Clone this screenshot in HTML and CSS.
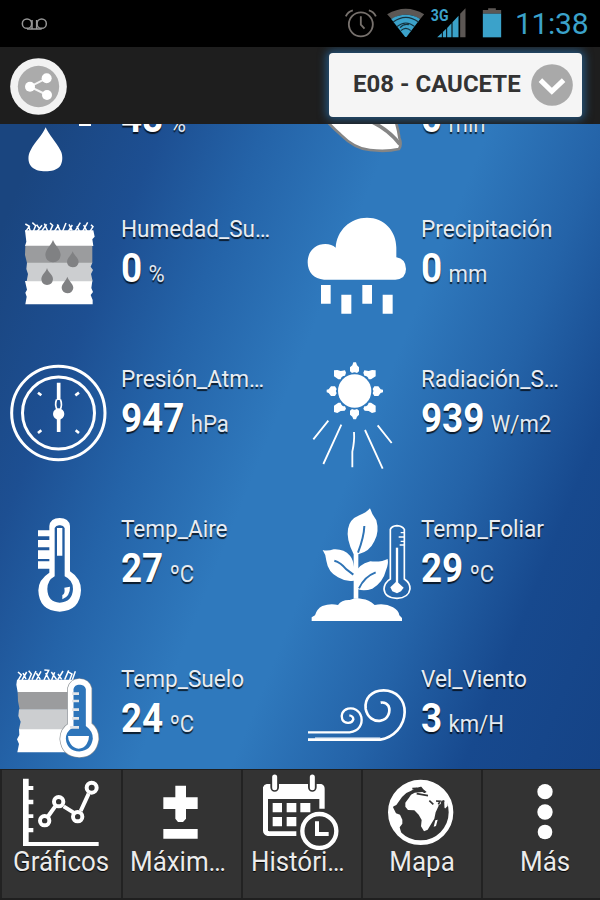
FILE: index.html
```html
<!DOCTYPE html>
<html lang="es">
  <head>
    <meta charset="utf-8" />
    <title>Estación E08 - Caucete</title>
    <meta name="viewport" content="width=device-width,initial-scale=1" />
    <link rel="stylesheet" href="styles.css">
  </head>

  <body>
    <div class="app">
      <div class="status-bar">
        <svg class="voicemail" viewBox="60 45 90 54">
          <g fill="none" stroke="#969696" stroke-width="4.5">
            <circle cx="81" cy="71" r="14" />
            <circle cx="125" cy="71" r="14" />
            <path d="M81 87H125M96 60V86M110 60V86" />
          </g>
        </svg>
        <svg class="status-icons" viewBox="120 0 500 141">
          <!-- alarm -->
          <g fill="none" stroke="#77716d" stroke-width="5.5">
            <circle cx="182" cy="73" r="36" />
            <path d="M182 49V74L193 86" />
            <path d="M137 49Q143 35 158 31M206 31Q221 35 227 49" />
          </g>
          <!-- wifi -->
          <path fill="#5c5754" d="M261 43Q317 10 372 43L360 57Q317 31 274 57Z" />
          <path fill="#3ba2ca" d="M273 57Q317 32 360 57L319 111H315Z" />
          <g fill="none" stroke="#16313c" stroke-width="3.5">
            <path d="M279 66Q317 38 355 66M290 80Q317 58 344 80M302 92Q317 78 332 92" />
            <path d="M300 83Q310 70 326 74" />
          </g>
          <!-- signal -->
          <path fill="#3ba2ca" d="M411 112L425 99V112ZM428 96L438 86V112H428ZM441 84L454 70V112H441ZM457 67L475 47V112H457Z" />
          <path fill="#5c5754" d="M480 41L496 25V112H480Z" />
          <!-- battery -->
          <path fill="#5c5754" d="M564 25H587V30H603V41H548V30H564Z" />
          <path fill="#3ba2ca" d="M548 41H603V112H548Z" />
          <text class="network" x="392" y="63" textLength="53" lengthAdjust="spacingAndGlyphs">3G</text>
        </svg>
        <span class="clock">11:38</span>
      </div>

      <div class="header">
        <svg class="share" viewBox="29 174 171 171">
          <circle cx="114.500" cy="259.500" r="85" fill="#f2f2f2" />
          <circle cx="114.500" cy="259.500" r="62" fill="#ababab" />
          <path d="M138 235L89 260L140 285" fill="none" stroke="#f5f5f5" stroke-width="6" />
          <g fill="#fff">
            <circle cx="139" cy="235" r="15" />
            <circle cx="89" cy="260" r="15" />
            <circle cx="140" cy="285" r="15" />
          </g>
        </svg>
        <button class="station">
          <span>E08 - CAUCETE</span>
          <svg viewBox="693 192 125 125">
            <circle cx="755.500" cy="254.500" r="62" fill="#a9a9a9" />
            <path d="M721 240L755 273L790 240" fill="none" stroke="#fff" stroke-width="15" />
          </svg>
        </button>
      </div>

      <div class="sensors">
        <div class="sensor-grid">
          <div class="sensor">
            <svg viewBox="0 150 360 450">
              <path fill="#fff" d="M137 382C145 402 166 423 182 452C188 463 189 483 182 496C173 511 152 514 137 514C120 514 101 511 91 496C83 483 84 464 91 452C107 423 129 403 137 382ZM237 360H273V378H237Z" />
            </svg>
            <div class="reading">
              <div class="name">&nbsp;</div>
              <div class="value"><b>48</b> <span>%</span></div>
            </div>
          </div>

          <div class="sensor">
            <svg viewBox="0 150 360 450">
              <path fill="#fff" stroke="#858585" stroke-width="8" d="M60 340Q91 377 121 403Q165 447 210 450Q258 456 297 447Q306 434 298 413Q294 380 280 345Z" />
              <path fill="none" stroke="#858585" stroke-width="11" d="M190 355Q258 379 300 433" />
            </svg>
            <div class="reading">
              <div class="name">&nbsp;</div>
              <div class="value"><b>0</b> <span>min</span></div>
            </div>
          </div>

          <div class="sensor">
            <svg viewBox="0 0 360 450">
              <path fill="#fff" d="M75 91H280L284 110L277 118L280 138H75L79 125ZM75 243H277L274 264L279 276L272 285L278 300V313H76L80 290L76 278L81 269Z" />
              <path fill="#9b9c9e" d="M76 137H277V189H81L75 165Z" />
              <path fill="#ccced0" d="M81 188H277L272 200L279 210L273 222L278 244H80L84 222L79 207Z" />
              <g fill="none" stroke="#fff" stroke-width="4.5">
                <path d="M77 95L88 79L76 72M91 94L86 78M100 94L107 77L97 68M112 94L126 76M118 86L110 74M125 93L140 73M143 93L133 71M150 94L158 76L150 69M163 94L176 75M181 94L172 73M188 94L198 69M205 94L217 75M216 91L207 73M225 94L241 68M238 94L231 78M248 94L263 67M261 94L251 75M270 94L279 80L273 74" />
              </g>
              <g fill="#808183">
                <path d="M159 120C164 135 182 148 182 165Q180 187 159 187Q138 187 136 165C136 148 154 135 159 120Z" />
                <path d="M218 154C222 166 236 174 236 186Q234 202 218 202Q202 201 201 186C201 174 214 166 218 154Z" />
                <path d="M141 204C144 217 159 223 159 238Q157 255 141 255Q126 255 124 238C124 224 138 217 141 204Z" />
                <path d="M202 230C206 243 220 251 220 264Q217 280 202 280Q187 279 185 264C185 251 198 243 202 230Z" />
              </g>
            </svg>
            <div class="reading">
              <div class="name">Humedad_Su…</div>
              <div class="value"><b>0</b> <span>%</span></div>
            </div>
          </div>

          <div class="sensor">
            <svg viewBox="0 0 360 450">
              <path fill="#fff" d="M72 239C42 237 23 217 23 187C23 153 46 132 76 132Q95 132 107 143C110 91 151 53 201 53C253 53 290 94 289 145V172Q317 176 318 207Q318 237 286 239Z" />
              <path fill="#fff" d="M63 255H92V311H63ZM124 284H154V341H124ZM187 255H216V311H187ZM248 284H278V341H248Z" />
            </svg>
            <div class="reading">
              <div class="name">Precipitación</div>
              <div class="value"><b>0</b> <span>mm</span></div>
            </div>
          </div>

          <div class="sensor">
            <svg viewBox="0 0 360 450">
              <g fill="none" stroke="#fff">
                <circle cx="175" cy="189" r="140" stroke-width="9" />
                <circle cx="175.500" cy="189" r="108" stroke-width="9" />
                <path stroke-width="8" d="M114 128L124 136M237 128L226 136M114 249L124 241M237 249L227 241" />
                <path stroke-width="11" d="M176 98V150M176 203V246" />
                <path stroke-width="5" d="M170 148Q163 164 172 180M181 148Q188 164 180 180" />
              </g>
              <circle cx="176" cy="192" r="17" fill="#fff" />
            </svg>
            <div class="reading">
              <div class="name">Presión_Atm…</div>
              <div class="value"><b>947</b> <span>hPa</span></div>
            </div>
          </div>

          <div class="sensor">
            <svg viewBox="0 0 360 450">
              <circle cx="164" cy="123" r="50" fill="#fff" />
              <g fill="#fff">
                <path d="M150 64V52L157 46L160 37H168L171 46L177 52V64L171 69Q163 65 156 69Z" />
                <path d="M150 182V194L157 200L160 208H168L171 200L177 194V182L171 177Q163 181 156 177Z" />
                <path d="M105 109H93L86 118L80 119V127L86 129L93 138H105L110 130Q105 123 110 117Z" />
                <path d="M223 109H235L242 118L249 119V127L242 129L235 138H223L218 130Q223 123 218 117Z" />
                <path d="M115 88L102 79V61L112 60L122 63L135 61L138 68L135 77Q124 77 122 88Z" />
                <path d="M213 88L227 79V61L216 60L206 63L193 61L190 68L193 77Q204 77 206 88Z" />
                <path d="M115 158L102 167V186L112 189L122 183L134 182L138 176L135 169Q124 169 122 158Z" />
                <path d="M213 158L227 167V186L216 189L206 183L194 182L190 176L193 169Q204 169 206 158Z" />
              </g>
              <path fill="none" stroke="#fff" stroke-width="5.5" d="M85 212L40 268M124 224L70 342M162 246Q164 273 157 305V352M195 240L248 356M233 226L275 279" />
            </svg>
            <div class="reading">
              <div class="name">Radiación_S…</div>
              <div class="value"><b>939</b> <span>W/m2</span></div>
            </div>
          </div>

          <div class="sensor">
            <svg viewBox="0 0 360 450">
              <path fill="#fff" fill-rule="evenodd" d="M148 91V78Q151 54 179 54Q207 54 210 78V214Q243 235 243 271Q240 333 179 335Q117 333 115 271Q115 239 148 218V206H114V184H148V177H114V151H148V142H114V120H148V109H114V91ZM164 84V229Q142 241 142 267Q143 306 179 308Q217 306 219 267Q219 240 194 229V84Q190 75 179 76Q168 75 164 84Z" />
              <path fill="#fff" d="M171 84H187V167H171ZM193 263L210 260Q211 288 187 298V285Q196 282 193 263Z" />
            </svg>
            <div class="reading">
              <div class="name">Temp_Aire</div>
              <div class="value"><b>27</b> <span>ºC</span></div>
            </div>
          </div>

          <div class="sensor">
            <svg viewBox="0 0 360 450">
              <g fill="#fff">
                <path d="M210 25Q215 42 229 61Q239 96 223 124Q209 155 175 163V296H161V242Q137 246 114 232Q84 216 79 182Q78 164 68 150Q83 154 101 148Q131 146 150 167Q160 179 161 200V163Q138 118 144 87Q148 58 178 46Q199 38 210 25Z" />
                <path d="M162 225Q174 193 211 184Q244 187 263 177Q266 192 258 211Q249 248 217 266Q193 275 174 268Z" />
                <path d="M35 363V352L45 346Q51 326 67 318Q91 309 114 315Q125 299 149 300Q168 291 187 297Q206 298 224 315Q256 309 279 322Q296 331 298 346L306 354V363Z" />
              </g>
              <path fill="none" stroke="#2e73b5" stroke-width="6" d="M193 78Q192 110 174 158M103 182Q122 187 139 208L160 224M177 265Q193 230 227 217" />
              <g fill="none" stroke="#fff" stroke-width="5">
                <path d="M271 237V88Q275 78 291 77Q307 78 313 88V237Q331 249 330 267Q326 294 291 295Q254 294 252 267Q253 248 271 237Z" />
                <path d="M302 98H314M296 111H314M302 124H314M299 135H314" stroke-width="4" />
                <path d="M291 143V255" stroke-width="7" />
              </g>
              <path fill="#fff" d="M290 244L311 263L303 274L291 280L277 274L271 262Z" />
            </svg>
            <div class="reading">
              <div class="name">Temp_Foliar</div>
              <div class="value"><b>29</b> <span>ºC</span></div>
            </div>
          </div>

          <div class="sensor">
            <svg viewBox="0 30 360 450">
              <path fill="#fff" d="M51 119H226V157H53L49 134ZM57 267H205V337H52L57 312L51 298L58 285Z" />
              <path fill="#9b9c9e" d="M53 156H208V209H59L54 183Z" />
              <path fill="#ccced0" d="M57 208H208V268H57L62 245L55 228Z" />
              <path fill="none" stroke="#fff" stroke-width="4.5" d="M54 122L64 105L54 96M66 120L80 96M78 117L69 99M86 121L94 102L86 92M96 119L108 93M109 120L123 94M121 119L109 99M132 120L146 91L133 90M148 120L137 99M155 120L164 97M170 119L154 96M173 120L189 93M185 118L174 102M194 119L206 91M209 120L216 102L202 94M217 119L226 94" />
              <path fill="#2d75ba" stroke="#8c9297" stroke-width="21" d="M212 257V146Q217 126 238 125Q261 126 266 146V254Q288 270 287 297Q281 341 238 343Q193 341 189 297Q189 271 212 257Z" />
              <path fill="#2d75ba" stroke="#fff" stroke-width="17" d="M212 257V146Q217 126 238 125Q261 126 266 146V254Q288 270 287 297Q281 341 238 343Q193 341 189 297Q189 271 212 257Z" />
              <path fill="none" stroke="#e2e5e8" stroke-width="8" d="M216 161H237M216 183H237M216 209H237M216 235H237M210 262H237" />
              <path fill="#fff" d="M204 288H267Q267 302 260 312Q251 326 236 326Q221 325 212 312Q204 302 204 288Z" />
            </svg>
            <div class="reading">
              <div class="name">Temp_Suelo</div>
              <div class="value"><b>24</b> <span>ºC</span></div>
            </div>
          </div>

          <div class="sensor">
            <svg viewBox="0 30 360 450">
              <g fill="none" stroke="#fff" stroke-width="8">
                <path d="M24 277H149C178 274 188 252 184 231C178 209 160 203 144 206C126 211 122 227 127 239C135 253 156 251 160 238Q160 228 148 226" stroke-width="7" />
                <path d="M24 299H241C281 292 313 259 314 217C315 179 288 151 251 151C213 151 193 177 197 207C202 232 221 245 242 242C265 238 273 214 265 197Q257 185 242 188" />
                <path d="M45 294H241" stroke-width="3" />
              </g>
            </svg>
            <div class="reading">
              <div class="name">Vel_Viento</div>
              <div class="value"><b>3</b> <span>km/H</span></div>
            </div>
          </div>
        </div>
      </div>

      <div class="nav">
        <div class="nav-item">
          <svg viewBox="4 30 360 240">
            <path fill="#fff" d="M67 56H84V78H98V90H84V119H98V133H84V163H98V174H84V204H98V217H84V246H294V258H67Z" />
            <g fill="none" stroke="#fff" stroke-width="12">
              <path d="M143 168L163 140M189 139L219 158M240 153L264 101" />
              <circle cx="132" cy="182" r="14" />
              <circle cx="174" cy="125" r="14" />
              <circle cx="231" cy="170" r="14" />
              <circle cx="273" cy="83" r="15" />
            </g>
          </svg>
          <span>Gráficos</span>
        </div>
        <div class="nav-item truncated">
          <svg viewBox="366 30 360 240">
            <path fill="#fff" d="M526 77H558V112H593V147H558V176L549 186H534L526 176V147H490V112H526ZM490 207H593V236H490Z" />
          </svg>
          <span>Máxim…</span>
        </div>
        <div class="nav-item truncated">
          <svg viewBox="726 30 360 240">
            <path fill="#fff" fill-rule="evenodd" d="M800 72H964Q974 75 974 86V146H958V117H804V212Q807 214 812 214H889V228H803Q789 224 789 212V82Q792 73 800 72Z" />
            <path fill="#fff" d="M818 129H846V157H818ZM860 129H889V157H860ZM901 129H931V157H901ZM818 171H846V199H818ZM860 171H889V199H860Z" />
            <g fill="none" stroke-linecap="round">
              <path stroke="#333" stroke-width="26" d="M824 53V82M937 53V82" />
              <path stroke="#fff" stroke-width="15" d="M824 51V83M937 51V83" />
            </g>
            <circle cx="958" cy="213" r="51" fill="#333" stroke="#fff" stroke-width="13" />
            <path fill="none" stroke="#fff" stroke-width="12" d="M951 184V222H986" />
          </svg>
          <span>Históri…</span>
        </div>
        <div class="nav-item">
          <svg viewBox="186 30 360 240">
            <circle cx="362" cy="157" r="91" fill="#333" stroke="#fff" stroke-width="14" />
            <path fill="#fff" d="M273 130L288 160L300 164L307 179V191L299 202L304 220L283 203L270 178ZM286 107Q309 68 355 69L367 79L348 84L332 93L319 99L306 111L289 135L275 142ZM344 98L367 96L385 106L399 107L410 119L416 137L407 157L403 176L393 193L383 209L372 214L363 199L365 180L356 164L343 151L324 150L316 140V128L327 113L333 104ZM352 65Q419 61 444 118L443 138L434 147L429 134L434 122L424 122L422 132L411 138L402 123L390 112L370 101L380 96L370 88ZM406 181L413 179L408 198L401 200Z" />
            <path fill="none" stroke="#333" stroke-width="5" d="M337 86L350 85L358 93L366 91M350 101L384 107M388 122L400 133M408 123L420 124L415 133M430 121L431 145L438 151" />
          </svg>
          <span>Mapa</span>
        </div>
        <div class="nav-item">
          <svg viewBox="556 30 360 240">
            <g fill="#fff">
              <circle cx="733" cy="95" r="23" />
              <circle cx="733" cy="156" r="23" />
              <circle cx="733" cy="216" r="22" />
            </g>
          </svg>
          <span>Más</span>
        </div>
      </div>
    </div>
  </body>
</html>
```

FILE: styles.css
```css
body {
  margin: 0;
  background: #000;
  font-family: Roboto, "Liberation Sans", sans-serif;
}

svg {
  display: block;
  flex: none;
}

.app {
  display: flex;
  flex-direction: column;
  width: 600px;
  height: 900px;
  overflow: hidden;
}

.status-bar {
  display: flex;
  align-items: center;
  height: 47px;
  flex: none;
  padding: 0 10px 0 20px;
  background: #000;
}

.voicemail {
  width: 30px;
  height: 18px;
}

.status-icons {
  width: 167px;
  height: 47px;
  margin-left: 290px;
  margin-right: 8px;
}

.network {
  font-size: 49px;
  font-weight: 700;
  fill: #3ba2ca;
}

.clock {
  font-size: 30px;
  line-height: 47px;
  color: #3ba2ca;
  letter-spacing: -0.3px;
}

.header {
  display: flex;
  align-items: center;
  justify-content: space-between;
  height: 77px;
  flex: none;
  box-sizing: border-box;
  padding: 0 18px 0 10px;
  background: #1e1e1e;
  overflow: hidden;
}

.share {
  width: 57px;
  height: 57px;
  margin-top: 1px;
}

.station {
  display: flex;
  align-items: center;
  justify-content: space-between;
  width: 253px;
  height: 64px;
  margin-top: -1px;
  padding: 0 9px 0 24px;
  border: none;
  border-radius: 4px;
  background: #f5f5f5;
  box-shadow: 0 0 8px 3px #24537a;
  font-family: inherit;
  font-size: 24px;
  font-weight: 700;
  color: #333;
  white-space: nowrap;
}

.station span {
  margin-top: -2px;
}

.station svg {
  width: 42px;
  height: 42px;
}

.sensors {
  height: 645px;
  flex: none;
  overflow: hidden;
  background: linear-gradient(112deg, #1a457f 5%, #1d4f92 19%, #2463a8 31%, #2f79bd 46%, #2f79bd 57%, #2463a8 71%, #17498e 84%, #154386 100%);
}

.sensor-grid {
  display: grid;
  grid-template-columns: 300px 300px;
  grid-auto-rows: 150px;
  margin-top: -74px;
}

.sensor {
  display: flex;
}

.sensor > svg {
  width: 120px;
  height: 150px;
}

.reading {
  padding: 14px 0 0 1px;
  color: #fff;
  white-space: nowrap;
  text-shadow: 0 2px 1px rgba(0, 0, 0, 0.75);
}

.name {
  font-size: 24px;
  line-height: 30px;
  color: #e9edf2;
  transform: scaleX(0.94);
  transform-origin: left;
}

.value {
  padding-top: 1px;
  line-height: 48px;
  transform: scaleX(0.92);
  transform-origin: left;
}

.value b {
  font-size: 40px;
}

.value span {
  margin-left: 3px;
  font-size: 24px;
  color: #e4eaf1;
}

.nav {
  display: grid;
  grid-template-columns: 121px 120px 120px 120px 127px;
  width: 608px;
  height: 131px;
  flex: none;
  box-sizing: border-box;
  padding: 1px 0 2px;
  background: #1f1f1f;
}

.nav-item {
  display: flex;
  flex-direction: column;
  align-items: center;
  box-sizing: border-box;
  border-left: 2px solid #222;
  background: #333;
}

.nav-item svg {
  width: 120px;
  height: 80px;
}

.nav-item span {
  margin-top: -4px;
  font-size: 27px;
  line-height: 32px;
  color: #ececec;
  text-shadow: 0 1px 1px #000;
  white-space: nowrap;
  transform: scaleX(0.96);
}

.truncated span {
  margin-left: -8px;
}
```
